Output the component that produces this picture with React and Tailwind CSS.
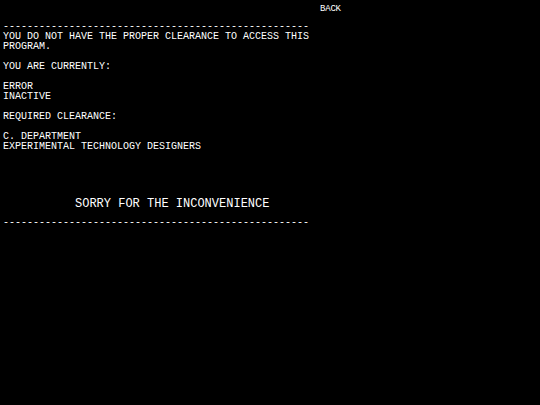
import React from 'react';

const DASHES = '-'.repeat(51);

const Line = ({ children }) => (
    <div className="h-[10px] leading-[10px] whitespace-pre">{children || ' '}</div>
);

export default function App() {
    return (
        <div className="w-full h-[405px] bg-black text-white font-['Liberation_Mono','DejaVu_Sans_Mono',monospace] overflow-hidden">
            <div className="h-[22px] pl-[320px] pt-[4px] text-[9px] leading-[10px]">
                <button className="text-white tracking-[-0.2px]">BACK</button>
            </div>

            <div className="pl-[3px] text-[10px]">
                <Line>{DASHES}</Line>
                <Line>YOU DO NOT HAVE THE PROPER CLEARANCE TO ACCESS THIS</Line>
                <Line>PROGRAM.</Line>
                <Line />
                <Line>YOU ARE CURRENTLY:</Line>
                <Line />
                <Line>ERROR</Line>
                <Line>INACTIVE</Line>
                <Line />
                <Line>REQUIRED CLEARANCE:</Line>
                <Line />
                <Line>C. DEPARTMENT</Line>
                <Line>EXPERIMENTAL TECHNOLOGY DESIGNERS</Line>

                <div className="h-[45px]" />
                <div className="pl-[72px] text-[12px] leading-[14px] h-[21px]">SORRY FOR THE INCONVENIENCE</div>
                <Line>{DASHES}</Line>
            </div>
        </div>
    );
}
